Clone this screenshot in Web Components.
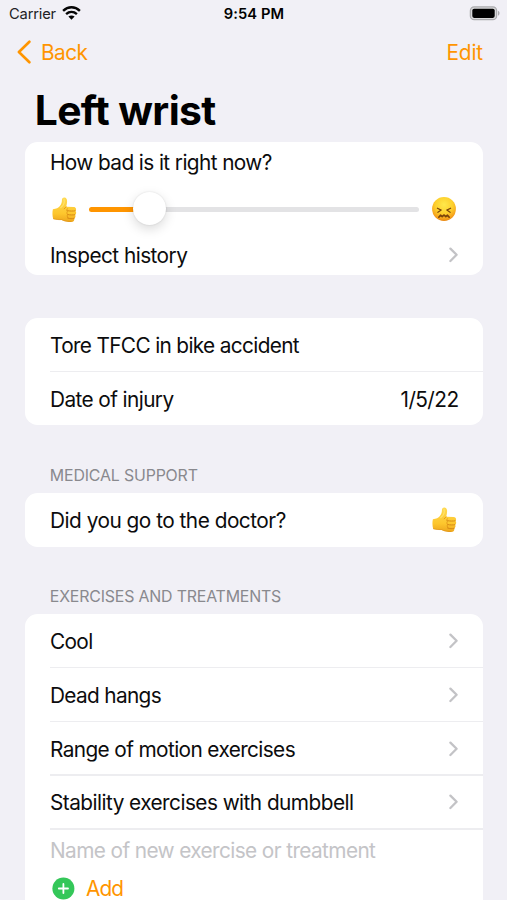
<!DOCTYPE html>
<html lang="en">
<head>
<meta charset="utf-8">
<title>Left wrist</title>
<style>
html, body { margin: 0; height: 900px; overflow: hidden; background: #f1f0f6; }
body { font-family: Inter, "Liberation Sans", sans-serif; font-size: 20.8px; color: #0c0c0d; }
</style>
</head>
<body>
<injury-screen></injury-screen>
<script>
const define = (name, html, extra) => customElements.define(name, class extends HTMLElement {
  constructor() {
    super();
    this.attachShadow({ mode: 'open' }).innerHTML = html;
  }
  connectedCallback() { if (extra) extra(this); }
});

// A single line of text whose tracking is adjusted to a given advance width.
define('fit-text', `
  <style>
    :host { display: block; white-space: nowrap; line-height: 1.2; flex: none; padding-top: var(--drop, 0px); }
    span { display: inline-block; }
  </style><span><slot></slot></span>`, el => {
  const span = el.shadowRoot.querySelector('span');
  const target = parseFloat(el.getAttribute('w'));
  const natural = span.getBoundingClientRect().width;
  span.style.letterSpacing = (target - natural) / el.textContent.length + 'px';
});

define('chevron-icon', `
  <style>:host { display: block; flex: none; width: 10px; height: 16px; } svg { display: block; }</style>
  <svg width="10" height="16" viewBox="0 0 10 16" fill="none" stroke="#c3c3c6" stroke-width="2.3" stroke-linecap="round" stroke-linejoin="round"><path d="M1.4 1.6 7.6 7.8 1.4 14"/></svg>`);

define('thumb-icon', `
  <style>:host { display: block; flex: none; width: 25px; height: 26px; } svg { display: block; }</style>
  <svg width="25" height="26" viewBox="0 0 25 26">
    <defs><linearGradient id="g" x1="0" y1="0" x2="0" y2="1"><stop offset="0" stop-color="#ffda52"/><stop offset=".65" stop-color="#fdc62d"/><stop offset="1" stop-color="#eda51d"/></linearGradient></defs>
    <path fill="url(#g)" d="M.9 12.3C4.2 11.8 6.4 11 7.9 9.1 9.2 7.3 10 5.4 9.9 3.2 9.8 1.5 11 .5 12.4.6c1.8.1 2.8 1.7 2.7 3.7 0 1.8-.4 3.7-.9 5.5l7.4.1c2.5 0 3.2 2.6 1.8 4 1.2 1.1 1 3-.3 3.8.8 1.2.4 2.9-.8 3.6.4 2.3-.9 3.9-3.1 3.8-3.4-.1-6.8-.5-9.5-2.1-2.6.1-5.5-.2-8.5-1C.3 19 .2 15.3.9 12.3Z"/>
    <g fill="none" stroke="#d88b16" stroke-width="1" stroke-linecap="round"><path d="M15.6 13.7c2.6.5 5.1.5 7.6.1M15.8 17.5c2.4.6 4.8.6 7 .2M15.7 21.1c2.1.7 4.5.8 6.5.2"/><path d="M14.2 9.9c-.6.8-1.2 1.4-2 1.8M15.3 11.8c-.8 1-.7 2.3.1 2.8-.7.9-.6 2.2.2 2.9-.6 1-.5 2.4.3 3.2" opacity=".75"/></g>
    <path d="M1.2 21.7c2.8.8 5.6 1 8.4.9 2.8 1.5 5.8 1.8 9.4 1.9" fill="none" stroke="#dd921b" stroke-width=".9" opacity=".7"/>
    <path d="M12 2.1c.7 2.9-.7 6.6-3.2 8.5" fill="none" stroke="#ffeb84" stroke-width="1.2" opacity=".65" stroke-linecap="round"/>
  </svg>`);

define('face-icon', `
  <style>:host { display: block; flex: none; width: 24px; height: 24px; } svg { display: block; }</style>
  <svg width="24" height="24" viewBox="0 0 24 24">
    <defs><radialGradient id="f" cx=".5" cy=".32" r=".68"><stop offset="0" stop-color="#ffe94b"/><stop offset=".55" stop-color="#fdcf2c"/><stop offset=".85" stop-color="#f6a31c"/><stop offset="1" stop-color="#e98711"/></radialGradient></defs>
    <circle cx="12" cy="12" r="11.9" fill="url(#f)"/>
    <g fill="none" stroke="#7a430a" stroke-linecap="round" stroke-linejoin="round">
      <path stroke-width="1.2" d="M5.4 11.2 9.2 13.1 5.9 15.3M18.6 11.2 14.8 13.1 18.1 15.3"/>
      <path stroke-width="1.7" d="M6.8 20.2 8.5 18.2 10.2 19.7 12 18 13.8 19.7 15.5 18.2 17.2 20.2"/>
    </g>
  </svg>`);

define('status-bar', `
  <style>
    :host { display: grid; grid-template-columns: 1fr auto 1fr; align-items: center; height: 28px; padding: 0 7px 0 9px; font-size: 14.7px; --drop: 2px; }
    .l { display: flex; align-items: center; gap: 5.5px; color: #222225; }
    b { font-weight: 600; color: #000; margin-left: -1px; }
    .r { justify-self: end; display: block; margin-top: -2px; }
    svg { display: block; }
    .w { margin-top: -2px; }
  </style>
  <div class="l"><fit-text w="47">Carrier</fit-text>
    <svg class="w" width="19" height="14" viewBox="0 0 19 14"><g fill="none" stroke="#050505" stroke-width="2.4"><path d="M1.1 4.8C6 .1 13 .1 17.9 4.8"/><path d="M4.1 8.2c3.2-2.9 7.6-2.9 10.8 0"/></g><path d="M9.5 13.8 6.4 10.6c1.9-1.5 4.3-1.5 6.2 0Z" fill="#050505"/></svg>
  </div>
  <b><fit-text w="60.5">9:54 PM</fit-text></b>
  <svg class="r" width="31" height="15" viewBox="0 0 31 15"><rect x="1.4" y=".9" width="26.2" height="12.8" rx="3.8" fill="#d8d8da" stroke="#aaaaad" stroke-width="1.3"/><rect x="3.3" y="2.7" width="22.4" height="9.2" rx="1.8" fill="#000"/><path d="M29 4.8c2 .7 2 4.3 0 5Z" fill="#aaaaad"/></svg>`);

define('nav-bar', `
  <style>
    :host { display: flex; align-items: center; justify-content: space-between; height: 49px; padding: 0 24px 0 16.5px; color: #ff9500; --drop: 2px; }
    div { display: flex; align-items: center; gap: 9.5px; }
    svg { display: block; }
  </style>
  <div><svg width="15" height="24" viewBox="0 0 15 24" fill="none" stroke="#ff9500" stroke-width="2.6" stroke-linecap="round" stroke-linejoin="round"><path d="M12.4 1.7 1.9 12 12.4 22.3"/></svg><fit-text w="46.5">Back</fit-text></div>
  <fit-text w="36.5">Edit</fit-text>`);

define('list-card', `
  <style>
    :host { display: block; box-sizing: border-box; margin: 0 24.5px 0 25px; background: #fff; border-radius: 12.5px; overflow: hidden; }
  </style><slot></slot>`);

define('list-row', `
  <style>
    :host { display: flex; flex-direction: column; box-sizing: border-box; height: 53.75px; padding-left: 25px; --drop: 3px; }
    .c { flex: 1; display: flex; align-items: center; justify-content: space-between; padding-right: 24px; }
    .s { display: none; height: 1.5px; margin-bottom: -1px; background: #ededf0; }
    :host([line]) .s { display: block; }
    :host([line]) .c { padding-top: 1.6px; }
  </style><div class="c"><slot></slot></div><div class="s"></div>`);

define('section-label', `
  <style>
    :host { display: flex; align-items: center; box-sizing: border-box; padding-left: 49.8px; height: 20px; font-size: 15.9px; color: #89898e; }
  </style><slot></slot>`);

define('pain-slider', `
  <style>
    :host { display: flex; align-items: center; height: 52px; padding: 0 26.5px 0 27px; }
    .t { position: relative; flex: 1; height: 5px; border-radius: 3px; margin: 1px 13px 0 12px; background: linear-gradient(90deg, #ff9500 18.2%, #e3e3e5 18.2%); }
    .k { position: absolute; left: 18.3%; top: 50%; width: 33.5px; height: 33.5px; margin: -17.7px 0 0 -16.5px; border-radius: 50%; background: #fff; box-shadow: 0 4px 12px rgba(0,0,0,.15), 0 0 2px rgba(0,0,0,.12); }
    thumb-icon { margin-top: 2px; }
  </style>
  <thumb-icon></thumb-icon><div class="t"><div class="k"></div></div><face-icon></face-icon>`);

define('add-row', `
  <style>
    :host { display: flex; align-items: center; height: 32px; padding-left: 26.5px; gap: 11.5px; color: #ff9500; --drop: 2px; }
    svg { display: block; }
  </style>
  <svg width="23" height="23" viewBox="0 0 23 23"><circle cx="11.4" cy="11.5" r="11" fill="#34c759"/><path d="M11.4 6.9v9.2M6.8 11.5h9.2" stroke="#fff" stroke-width="1.8" stroke-linecap="round"/></svg>
  <fit-text w="37">Add</fit-text>`);

define('injury-screen', `
  <style>
    :host { display: block; height: 900px; overflow: hidden; }
    h1 { margin: 0; height: 65px; padding-left: 34.7px; display: flex; align-items: center; font-size: 40.8px; font-weight: 700; color: #000; --drop: 2px; }
    .a { height: 133px; }
    .q { height: 41px; --drop: 2px; }
    .i { height: 40px; }
    .b { margin-top: 42.7px; }
    .m { margin-top: 40px; }
    .after { margin-top: 7.6px; }
    .e { margin-top: 39.5px; --drop: 1px; }
    .n { height: 43.5px; color: #c4c4c7; }
    .last { height: 330px; }
    .d { --drop: 4px; }
    .thumb { margin: 1px 1.8px 0 0; }
  </style>
  <status-bar></status-bar>
  <nav-bar></nav-bar>
  <h1><fit-text w="181">Left wrist</fit-text></h1>
  <list-card class="a">
    <list-row class="q"><fit-text w="221.8">How bad is it right now?</fit-text></list-row>
    <pain-slider></pain-slider>
    <list-row class="i"><fit-text w="137.3">Inspect history</fit-text><chevron-icon></chevron-icon></list-row>
  </list-card>
  <list-card class="b">
    <list-row line><fit-text w="249">Tore TFCC in bike accident</fit-text></list-row>
    <list-row class="d"><fit-text w="123.5">Date of injury</fit-text><fit-text w="58">1/5/22</fit-text></list-row>
  </list-card>
  <section-label class="m"><fit-text w="148">MEDICAL SUPPORT</fit-text></section-label>
  <list-card class="after">
    <list-row><fit-text w="235.8">Did you go to the doctor?</fit-text><thumb-icon class="thumb"></thumb-icon></list-row>
  </list-card>
  <section-label class="e"><fit-text w="231.3">EXERCISES AND TREATMENTS</fit-text></section-label>
  <list-card class="after last">
    <list-row line><fit-text w="42.5">Cool</fit-text><chevron-icon></chevron-icon></list-row>
    <list-row line><fit-text w="111">Dead hangs</fit-text><chevron-icon></chevron-icon></list-row>
    <list-row line><fit-text w="245">Range of motion exercises</fit-text><chevron-icon></chevron-icon></list-row>
    <list-row line><fit-text w="303.5">Stability exercises with dumbbell</fit-text><chevron-icon></chevron-icon></list-row>
    <list-row class="n"><fit-text w="325.3">Name of new exercise or treatment</fit-text></list-row>
    <add-row></add-row>
  </list-card>`);
</script>
</body>
</html>
